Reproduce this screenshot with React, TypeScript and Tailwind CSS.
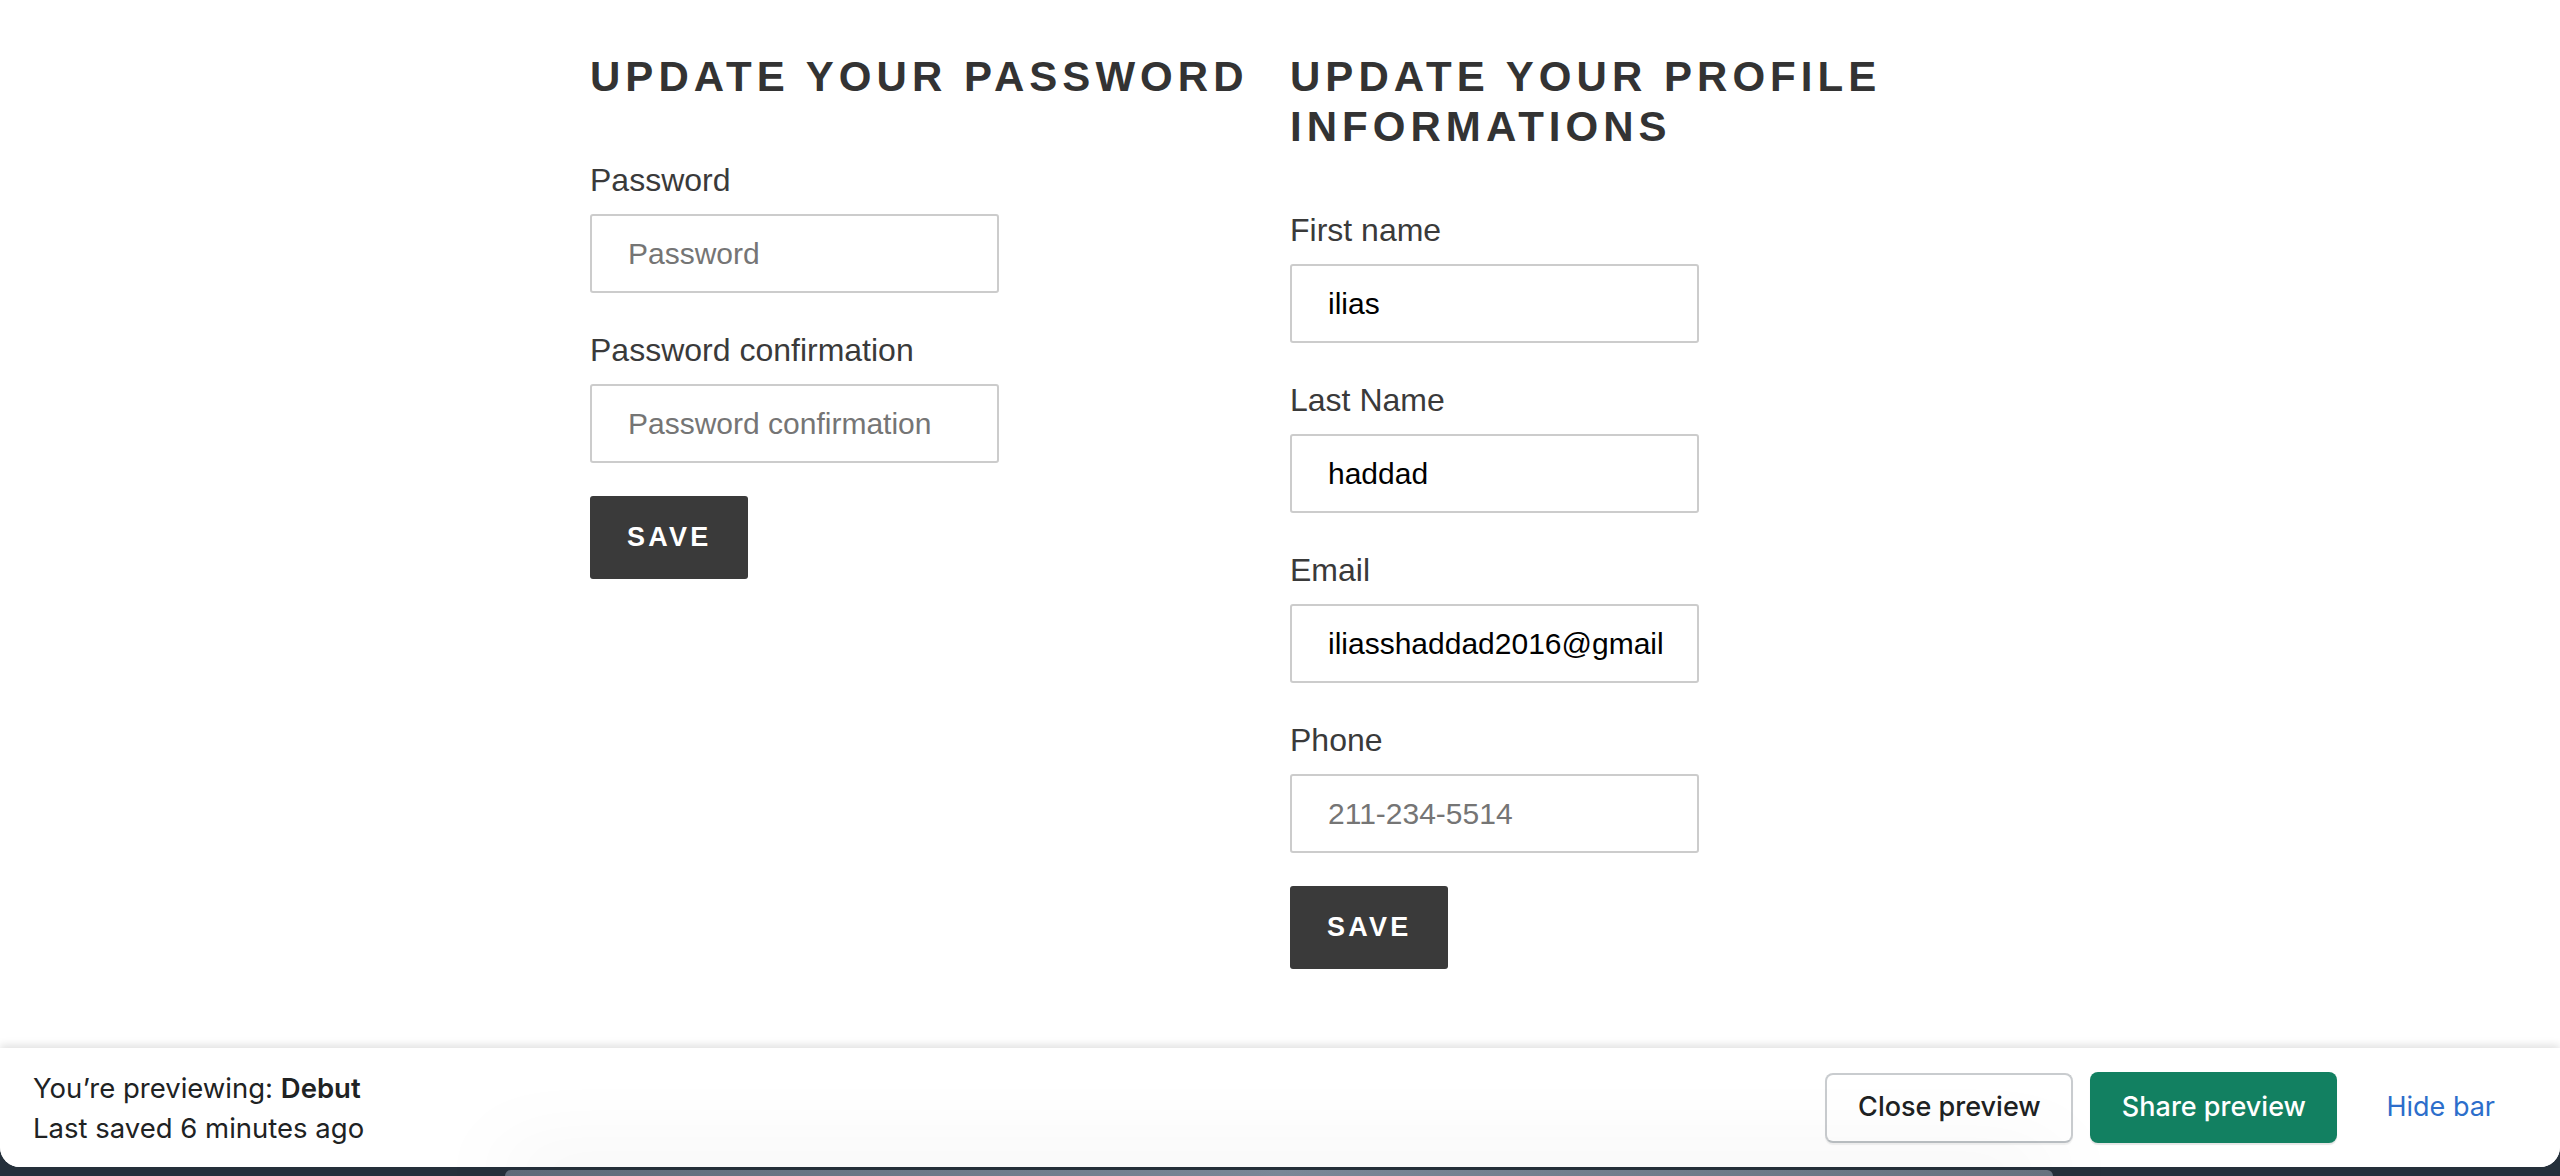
const Field = ({ label, placeholder, value }: { label: string; placeholder?: string; value?: string }) => (
  <div className="mb-[33px] flex flex-col">
    <label className="mb-[10px] text-[32px] leading-[48px] text-[#3a3a3a]">{label}</label>
    <input
      className="h-[79px] w-[409px] rounded-[3px] border-2 border-[#cccccc] bg-white pl-[36px] pr-[32px] text-[30px] text-black outline-none placeholder:text-[#757575]"
      placeholder={placeholder}
      defaultValue={value}
    />
  </div>
);

const SaveButton = () => (
  <button className="h-[83px] self-start rounded-[3px] bg-[#3a3a3a] px-[37px] text-[27px] font-bold uppercase tracking-[0.12em] text-white">
    Save
  </button>
);

const Heading = ({ children }: { children: string }) => (
  <h2 className="mb-[54px] text-[42px] font-bold uppercase leading-[50px] tracking-[0.12em] text-[#333333]">
    {children}
  </h2>
);

const PreviewBar = () => (
  <div className="flex h-[119px] items-center justify-between bg-white pl-[33px] pr-[33px] font-['Inter',sans-serif] text-[#202223] shadow-[0_-3px_8px_rgba(0,0,0,0.12)]">
    <div className="flex flex-col text-[27.5px] leading-[40px]">
      <span>
        You’re previewing: <span className="font-semibold">Debut</span>
      </span>
      <span>Last saved 6 minutes ago</span>
    </div>
    <div className="flex items-center gap-[17px] text-[27px] font-medium">
      <button className="h-[70px] w-[248px] rounded-[8px] border-2 border-[#c9cccf] border-b-[#babfc3] bg-white text-[#202223] shadow-[0_2px_1px_rgba(0,0,0,0.06)]">
        Close preview
      </button>
      <button className="h-[71px] w-[247px] rounded-[8px] bg-[#128061] text-white shadow-[0_2px_1px_rgba(0,0,0,0.1)]">
        Share preview
      </button>
      <button className="px-[32px] font-normal text-[#2c6ecb]">Hide bar</button>
    </div>
  </div>
);

export default function App() {
  return (
    <div className="relative h-[1176px] overflow-hidden bg-[#25303b]">
      <div className="flex h-[1167px] flex-col overflow-hidden rounded-b-[20px] bg-white">
        <main className="flex-1 pt-[52px] font-['Liberation_Sans',Arial,sans-serif]">
          <div className="mx-auto grid w-[1420px] grid-cols-[700px_700px] pl-[20px]">
            <section className="flex flex-col">
              <Heading>Update your password</Heading>
              <Field label="Password" placeholder="Password" />
              <Field label="Password confirmation" placeholder="Password confirmation" />
              <SaveButton />
            </section>
            <section className="flex flex-col">
              <Heading>Update your profile informations</Heading>
              <Field label="First name" placeholder="First name" value="ilias" />
              <Field label="Last Name" placeholder="Last Name" value="haddad" />
              <Field label="Email" placeholder="Email" value="iliasshaddad2016@gmail.com" />
              <Field label="Phone" placeholder="211-234-5514" />
              <SaveButton />
            </section>
          </div>
        </main>
        <PreviewBar />
      </div>
      <div className="absolute bottom-0 left-[505px] h-[6px] w-[1548px] rounded-t-[14px] bg-gradient-to-r from-[#5e6a78] via-[#7a8797] to-[#66727f] shadow-[0_0_80px_rgba(0,0,0,0.35)]" />
    </div>
  );
}
